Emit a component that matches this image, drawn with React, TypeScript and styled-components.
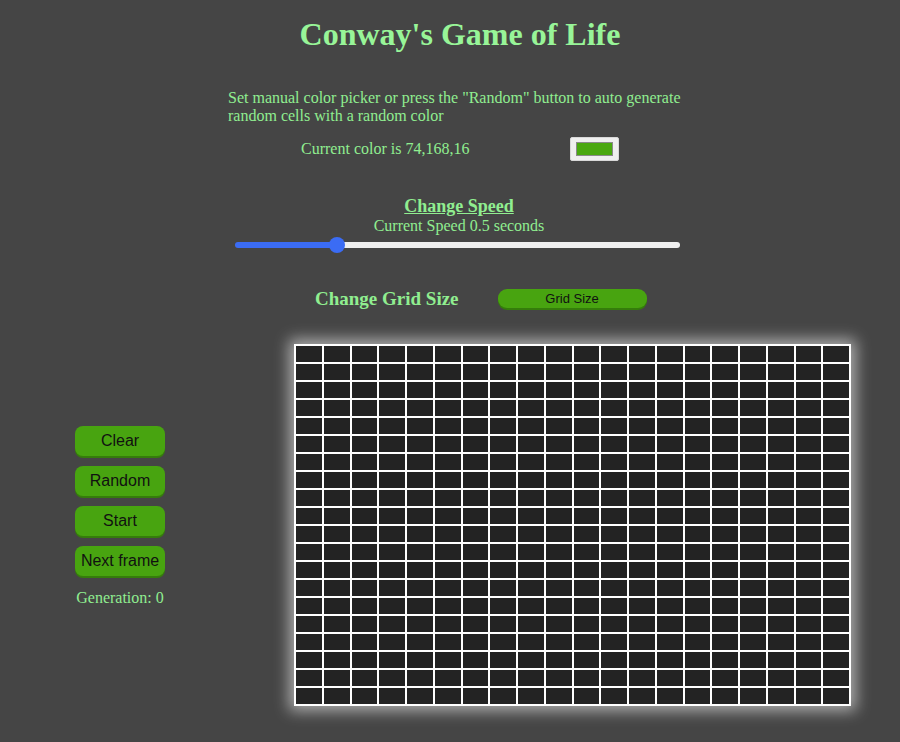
import React, { useState } from 'react';
import styled, { createGlobalStyle } from 'styled-components';

const GREEN_TEXT = '#90ee90';
const BUTTON_GREEN = '#48a410';
const BUTTON_SHADOW = '#357d0b';
const ROWS = 20;
const COLS = 20;

const GlobalStyle = createGlobalStyle`
  html, body {
    margin: 0;
    padding: 0;
    background: #454545;
  }
  body {
    font-family: 'Liberation Serif', 'Times New Roman', serif;
    color: ${GREEN_TEXT};
  }
`;

function App() {
  const [speed, setSpeed] = useState(22);
  const cells = Array.from({ length: ROWS * COLS });

  return (
    <StPage>
      <GlobalStyle />
      <StTitle>Conway's Game of Life</StTitle>

      <StIntro>
        <StDescription>
          Set manual color picker or press the "Random" button to auto generate random cells with a random color
        </StDescription>
        <StColorRow>
          <span>Current color is 74,168,16</span>
          <StColorPicker aria-label="color picker">
            <StSwatch $color="rgb(74,168,16)" />
          </StColorPicker>
        </StColorRow>
      </StIntro>

      <StSpeed>
        <StSpeedTitle>Change Speed</StSpeedTitle>
        <StSpeedText>Current Speed 0.5 seconds</StSpeedText>
        <StSlider
          type="range"
          min={0}
          max={100}
          value={speed}
          onChange={(e) => setSpeed(Number(e.target.value))}
          style={{
            background: `linear-gradient(to right, #3b6cf4 0%, #3b6cf4 ${speed}%, #efefef ${speed}%, #efefef 100%)`,
          }}
        />
      </StSpeed>

      <StGridSizeRow>
        <StGridSizeLabel>Change Grid Size</StGridSizeLabel>
        <StGridSizeButton>Grid Size</StGridSizeButton>
      </StGridSizeRow>

      <StBoardRow>
        <StControls>
          <StControlButton>Clear</StControlButton>
          <StControlButton>Random</StControlButton>
          <StControlButton>Start</StControlButton>
          <StControlButton>Next frame</StControlButton>
          <StGeneration>Generation: 0</StGeneration>
        </StControls>
        <StBoard>
          {cells.map((_, i) => (
            <StCell key={i} />
          ))}
        </StBoard>
      </StBoardRow>
    </StPage>
  );
}

export default App;

const StPage = styled.div`
  width: 900px;
  height: 742px;
  overflow: hidden;
`;

const StTitle = styled.h1`
  margin: 15px 0 0 20px;
  font-size: 32px;
  line-height: 38px;
  font-weight: bold;
  text-align: center;
  color: #98f598;
`;

const StIntro = styled.div`
  margin: 36px 0 0 228px;
  width: 462px;
`;

const StDescription = styled.p`
  margin: 0;
  font-size: 16px;
  line-height: 18px;
`;

const StColorRow = styled.div`
  display: flex;
  align-items: center;
  gap: 101px;
  margin-top: 12px;
  padding-left: 73px;
  height: 24px;
  font-size: 16px;
`;

const StColorPicker = styled.div`
  box-sizing: border-box;
  width: 49px;
  height: 24px;
  padding: 4px 5px;
  background: #efefef;
  border: 1px solid #d8d8d8;
  border-radius: 2px;
`;

const StSwatch = styled.div<{ $color: string }>`
  width: 100%;
  height: 100%;
  background: ${(p) => p.$color};
  border: 1px solid #8a8a8a;
  box-sizing: border-box;
`;

const StSpeed = styled.div`
  display: flex;
  flex-direction: column;
  align-items: center;
  margin: 35px 0 0 18px;
`;

const StSpeedTitle = styled.div`
  font-size: 18px;
  line-height: 21px;
  font-weight: bold;
  text-decoration: underline;
`;

const StSpeedText = styled.div`
  font-size: 16px;
  line-height: 18px;
`;

const StSlider = styled.input`
  -webkit-appearance: none;
  appearance: none;
  width: 445px;
  height: 6px;
  margin: 7px 0 0 -4px;
  border-radius: 3px;
  outline: none;

  &::-webkit-slider-thumb {
    -webkit-appearance: none;
    width: 16px;
    height: 16px;
    border-radius: 50%;
    background: #3b6cf4;
    border: none;
    cursor: pointer;
  }
`;

const StGridSizeRow = styled.div`
  display: flex;
  align-items: center;
  gap: 39px;
  margin: 41px 0 0 315px;
  height: 20px;
`;

const StGridSizeLabel = styled.div`
  font-size: 19px;
  font-weight: bold;
`;

const StGridSizeButton = styled.button`
  width: 149px;
  height: 19px;
  padding: 0;
  border: none;
  border-radius: 9px;
  background: ${BUTTON_GREEN};
  box-shadow: 0 2px 0 ${BUTTON_SHADOW};
  color: #111;
  font-family: 'Liberation Sans', Arial, sans-serif;
  font-size: 13px;
  line-height: 17px;
  margin-top: -2px;
`;

const StBoardRow = styled.div`
  display: flex;
  align-items: flex-start;
  margin-top: 35px;
  padding-left: 75px;
`;

const StControls = styled.div`
  display: flex;
  flex-direction: column;
  align-items: center;
  gap: 10px;
  width: 90px;
  margin-top: 82px;
  margin-right: 129px;
`;

const StControlButton = styled.button`
  width: 90px;
  height: 30px;
  padding: 0;
  border: none;
  border-radius: 8px;
  background: ${BUTTON_GREEN};
  box-shadow: 0 2px 0 ${BUTTON_SHADOW};
  color: #111;
  font-family: 'Liberation Sans', Arial, sans-serif;
  font-size: 16px;
`;

const StGeneration = styled.div`
  margin-top: 3px;
  font-size: 16px;
  line-height: 18px;
`;

const StBoard = styled.div`
  display: grid;
  grid-template-columns: repeat(${COLS}, 1fr);
  grid-auto-rows: 16px;
  gap: 2px;
  padding: 2px;
  width: 557px;
  box-sizing: border-box;
  background: #fff;
  box-shadow: 0 0 14px 5px rgba(255, 255, 255, 0.55);
`;

const StCell = styled.div`
  background: #232323;
`;
